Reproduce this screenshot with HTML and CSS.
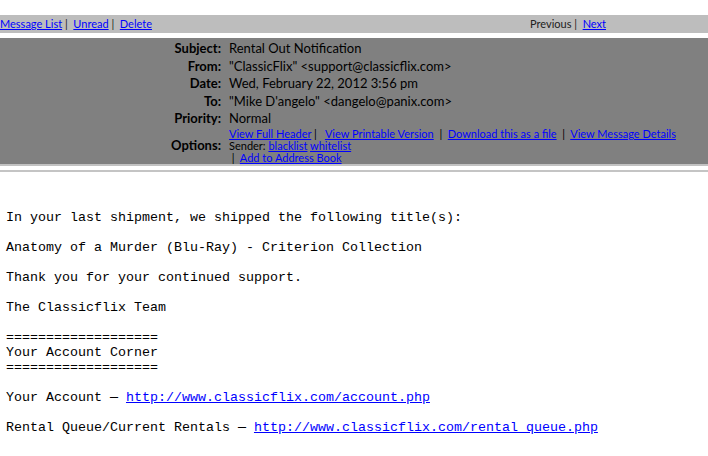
FILE: index.html
```html
<!DOCTYPE html>
<html>
<head>
<meta charset="utf-8">
<link rel="stylesheet" href="styles.css">
</head>
<body>
<div class="page">
  <div class="topbar">
    <div class="nav-left"><a href="#">Message List</a>&nbsp;|&nbsp; <a href="#">Unread</a>&nbsp;|&nbsp; <a href="#">Delete</a></div>
    <div class="nav-right">Previous&nbsp;|&nbsp; <a href="#">Next</a></div>
  </div>
  <div class="header">
    <div class="label">Subject:</div><div class="value">Rental Out Notification</div>
    <div class="label">From:</div><div class="value">"ClassicFlix" &lt;support@classicflix.com&gt;</div>
    <div class="label">Date:</div><div class="value">Wed, February 22, 2012 3:56 pm</div>
    <div class="label">To:</div><div class="value">"Mike D'angelo" &lt;dangelo@panix.com&gt;</div>
    <div class="label">Priority:</div><div class="value">Normal</div>
    <div class="label label-mid">Options:</div>
    <div class="value options">
      <div><a href="#">View Full Header</a>&nbsp;|&nbsp;&nbsp; <a href="#">View Printable Version</a>&nbsp;&nbsp;|&nbsp; <a href="#">Download this as a file</a>&nbsp;&nbsp;|&nbsp; <a href="#">View Message Details</a></div>
      <div>Sender: <a href="#">blacklist</a> <a href="#">whitelist</a></div>
      <div>&nbsp;|&nbsp; <a href="#">Add to Address Book</a></div>
    </div>
  </div>
  <div class="rule"></div>
<pre class="body">
In your last shipment, we shipped the following title(s):

Anatomy of a Murder (Blu-Ray) - Criterion Collection

Thank you for your continued support.

The Classicflix Team

===================
Your Account Corner
===================

Your Account &mdash; <a href="#">http://www.classicflix.com/account.php</a>

Rental Queue/Current Rentals &mdash; <a href="#">http://www.classicflix.com/rental_queue.php</a>
</pre>
</div>
</body>
</html>
```

FILE: styles.css
```css
html, body {
  margin: 0;
  padding: 0;
  background: #ffffff;
}
.page {
  padding-top: 15px;
  font-family: Lato, "DejaVu Sans", sans-serif;
  color: #000;
}
a { color: #0000ff; text-decoration: underline; }
.topbar {
  display: flex;
  height: 18px;
  line-height: 18px;
  background: #bdbdbd;
  font-size: 11px;
  color: #222;
}
.nav-left { width: 530px; }
.header {
  margin-top: 5px;
  background: #808080;
  border-bottom: 2px solid #c2c2c2;
  display: grid;
  grid-template-columns: 221px 1fr;
  column-gap: 8px;
  padding: 2px 0 0 0;
  height: 124px;
  box-sizing: content-box;
  font-size: 13px;
  color: #000;
}
.label {
  text-align: right;
  font-weight: bold;
  line-height: 17px;
}
.label-mid { align-self: center; }
.value { line-height: 17px; }
.options {
  font-size: 11px;
  line-height: 12px;
}
.rule {
  margin-top: 4px;
  height: 2px;
  background: #c4c4c4;
}
.body {
  margin: 38px 0 0 6px;
  font-family: "Liberation Mono", monospace;
  font-size: 13.33px;
  line-height: 15px;
  color: #000;
}
```
